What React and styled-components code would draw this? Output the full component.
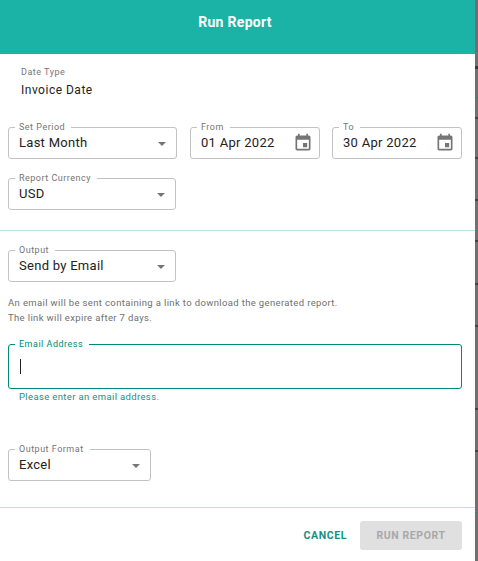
import React from "react";
import styled, { createGlobalStyle } from "styled-components";

const Global = createGlobalStyle`
  html, body { margin: 0; padding: 0; background: #fff; }
  body { font-family: Roboto, "Liberation Sans", sans-serif; overflow: hidden; }
  * { box-sizing: border-box; }
`;

const Page = styled.div`
  width: 478px;
  height: 561px;
  display: flex;
  background: #707070;
`;

const Dialog = styled.div`
  width: 475px;
  height: 561px;
  background: #fff;
  display: flex;
  flex-direction: column;
`;

const Header = styled.header`
  height: 54px;
  flex: none;
  background: #1ab3a6;
  color: #fff;
  font-size: 14px;
  font-weight: 700;
  letter-spacing: 0.3px;
  display: flex;
  align-items: center;
  justify-content: center;
  padding: 0 5px 10px 0;
`;

const Section = styled.section`
  display: flex;
  flex-direction: column;
  padding: ${(p) => p.$padding};
`;

const Divider = styled.hr`
  margin: 0;
  border: 0;
  height: 1px;
  flex: none;
  background: #b9e3de;
`;

const ReadOnly = styled.div`
  padding-left: 13px;
  height: 40px;
  display: flex;
  flex-direction: column;
`;

const ReadLabel = styled.span`
  font-size: 9px;
  line-height: 12px;
  letter-spacing: 0.5px;
  color: #767676;
`;

const ReadValue = styled.span`
  margin-top: 4px;
  font-size: 12px;
  line-height: 16px;
  letter-spacing: 0.5px;
  color: #222;
`;

const Row = styled.div`
  display: flex;
  gap: ${(p) => p.$gap || 0}px;
  margin-top: ${(p) => p.$top || 0}px;
`;

const Field = styled.div`
  position: relative;
  width: ${(p) => p.$width}px;
  height: ${(p) => p.$height || 32}px;
  flex: none;
  border: 1px solid ${(p) => (p.$focused ? "#00897b" : "#c2c2c2")};
  border-radius: 3px;
  display: flex;
  align-items: center;
  padding: 0 ${(p) => p.$right || 10}px 0 ${(p) => p.$left || 10}px;
  margin-top: ${(p) => p.$top || 0}px;
`;

const Legend = styled.span`
  position: absolute;
  top: -6px;
  left: 6px;
  padding: 0 6px 0 4px;
  background: #fff;
  font-size: 9px;
  line-height: 11px;
  letter-spacing: 0.5px;
  white-space: nowrap;
  color: ${(p) => (p.$focused ? "#00897b" : "#757575")};
`;

const Value = styled.span`
  flex: 1;
  font-size: 13px;
  line-height: 16px;
  letter-spacing: 0.28px;
  color: #222;
  white-space: nowrap;
`;

const Caret = styled.span`
  width: 1px;
  height: 15px;
  margin-left: 1px;
  background: #222;
`;

const Help = styled.p`
  margin: ${(p) => p.$top}px 0 0 ${(p) => p.$left}px;
  font-size: 9.5px;
  line-height: 15px;
  letter-spacing: 0.36px;
  white-space: nowrap;
  color: ${(p) => p.$color};
`;

const Spacer = styled.div`
  height: 26px;
  flex: none;
`;

const Footer = styled.footer`
  flex: 1;
  display: flex;
  align-items: flex-start;
  justify-content: flex-end;
  gap: 13px;
  padding: 13px 13px 0 0;
`;

const TextButton = styled.button`
  border: 0;
  background: none;
  padding: 0;
  height: 29px;
  font: 700 10.5px Roboto, sans-serif;
  letter-spacing: 0.6px;
  color: #15917f;
`;

const SolidButton = styled.button`
  border: 0;
  border-radius: 3px;
  width: 102px;
  height: 29px;
  padding: 0;
  background: #e0e0e0;
  font: 700 10.5px Roboto, sans-serif;
  letter-spacing: 0.6px;
  color: #a8a8a8;
`;

const Arrow = () => (
  <svg width="8" height="4" viewBox="0 0 8 4" style={{ flex: "none", marginTop: 2 }}>
    <path d="M0 0h8L4 4z" fill="#757575" />
  </svg>
);

const Calendar = () => (
  <svg width="20" height="20" viewBox="0 0 24 24" style={{ flex: "none", marginRight: -2.5 }}>
    <path
      fill="#757575"
      d="M17 12h-5v5h5v-5zM16 1v2H8V1H6v2H5c-1.11 0-1.99.9-1.99 2L3 19c0 1.1.89 2 2 2h14c1.1 0 2-.9 2-2V5c0-1.1-.9-2-2-2h-1V1h-2zm3 18H5V8h14v11z"
    />
  </svg>
);

const backdropMarks = [
  [66, "#3a3a3a", 3], [117, "#444", 2], [157, "#444", 2], [199, "#444", 2], [240, "#444", 2],
  [283, "#444", 2], [325, "#444", 2], [408, "#444", 2], [450, "#444", 2],
  [97, "#3f7f76", 1], [512, "#3f7f76", 1],
];

const Backdrop = () => (
  <svg width="3" height="561" viewBox="0 0 3 561" style={{ flex: "none" }}>
    {backdropMarks.map(([y, color, h]) => (
      <rect key={y} x="0" y={y} width="3" height={h} fill={color} />
    ))}
  </svg>
);

const Select = ({ label, value, width, top }) => (
  <Field $width={width} $top={top} $right={10}>
    <Legend>{label}</Legend>
    <Value>{value}</Value>
    <Arrow />
  </Field>
);

const DateField = ({ label, value, width }) => (
  <Field $width={width} $right={9}>
    <Legend>{label}</Legend>
    <Value>{value}</Value>
    <Calendar />
  </Field>
);

export default function App() {
  return (
    <Page>
      <Global />
      <Dialog>
        <Header>Run Report</Header>
        <Section $padding="12px 0 20px 8px">
          <ReadOnly>
            <ReadLabel>Date Type</ReadLabel>
            <ReadValue>Invoice Date</ReadValue>
          </ReadOnly>
          <Row $gap={13} $top={21}>
            <Select label="Set Period" value="Last Month" width={169} />
            <Row $gap={12}>
              <DateField label="From" value="01 Apr 2022" width={130} />
              <DateField label="To" value="30 Apr 2022" width={130} />
            </Row>
          </Row>
          <Select label="Report Currency" value="USD" width={168} top={19} />
        </Section>
        <Divider />
        <Section $padding="19px 13px 0 8px">
          <Select label="Output" value="Send by Email" width={168} />
          <Help $top={13} $left={0} $color="#6f6f6f">
            An email will be sent containing a link to download the generated report.
            <br />
            The link will expire after 7 days.
          </Help>
          <Field $width={454} $height={45} $top={19} $focused>
            <Legend $focused>Email Address</Legend>
            <Caret />
          </Field>
          <Help $top={0} $left={11} $color="#15917f">Please enter an email address.</Help>
          <Select label="Output Format" value="Excel" width={143} top={45} />
        </Section>
        <Spacer />
        <Divider />
        <Footer>
          <TextButton>CANCEL</TextButton>
          <SolidButton>RUN REPORT</SolidButton>
        </Footer>
      </Dialog>
      <Backdrop />
    </Page>
  );
}
